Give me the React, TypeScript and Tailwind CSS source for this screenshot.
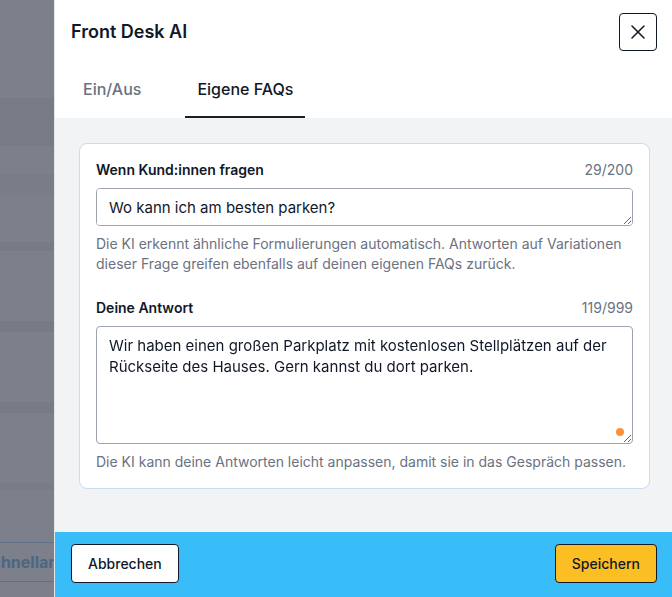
import { X } from "lucide-react";

function Backdrop() {
  return (
    <div className="w-[54px] shrink-0 bg-[#7b808b] flex flex-col overflow-hidden">
      <div className="h-[98px] shrink-0" />
      <div className="h-[48px] shrink-0 bg-[#767b86]" />
      <div className="h-[28px] shrink-0" />
      <div className="h-[21px] shrink-0 bg-[#787d88]" />
      <div className="h-[47px] shrink-0" />
      <div className="h-[9px] shrink-0 bg-[#767b86]" />
      <div className="h-[70px] shrink-0" />
      <div className="h-[11px] shrink-0 bg-[#767b86]" />
      <div className="h-[70px] shrink-0" />
      <div className="h-[11px] shrink-0 bg-[#767b86]" />
      <div className="h-[70px] shrink-0" />
      <div className="h-[7px] shrink-0 bg-[#777c87]" />
      <div className="h-[52px] shrink-0" />
      <div className="h-[40px] w-[54px] shrink-0 border-y border-[#5d7087] flex items-center overflow-hidden">
        <span className="-ml-[19px] whitespace-nowrap text-[16px] font-bold text-[#4d6682]">
          Schnellan
        </span>
      </div>
    </div>
  );
}

function Field({
  label,
  count,
  value,
  hint,
  heightClass,
  dot,
}: {
  label: string;
  count: string;
  value: string;
  hint: string;
  heightClass: string;
  dot?: boolean;
}) {
  return (
    <div className="flex flex-col">
      <div className="flex items-center justify-between">
        <span className="text-sm leading-5 font-semibold text-[#111827]">{label}</span>
        <span className="text-sm leading-5 text-[#6b7280]">{count}</span>
      </div>
      <div className="relative mt-2">
        <textarea
          readOnly
          value={value}
          className={`block w-full ${heightClass} rounded-[4px] border border-[#9ca3af] bg-white px-3 py-2 text-[15px] leading-[21px] text-[#111827] outline-none`}
        />
        {dot && (
          <span className="absolute right-[9px] bottom-[8px] h-2 w-2 rounded-full bg-[#fb923c]" />
        )}
      </div>
      <p className="mt-2 text-sm leading-5 text-[#6b7280]">{hint}</p>
    </div>
  );
}

export default function App() {
  return (
    <div
      className="flex h-[597px] w-[672px] overflow-hidden"
      style={{ fontFamily: "Inter, 'Noto Sans', sans-serif" }}
    >
      <Backdrop />
      <div className="flex min-w-0 flex-1 flex-col border-l border-[#e5e7eb] bg-white">
        {/* header */}
        <div className="pl-[16px] pr-[15px]">
          <div className="mt-[13px] flex h-[38px] items-center justify-between">
            <h2 className="text-lg font-semibold text-[#111827]">Front Desk AI</h2>
            <button className="flex h-[38px] w-[38px] shrink-0 items-center justify-center rounded-[4px] border border-[#111827] text-[#111827]">
              <X size={24} strokeWidth={1.5} />
            </button>
          </div>
          <div className="mt-[14px] flex gap-8">
            <button className="border-b-2 border-transparent px-3 pt-3 pb-[15px] text-base leading-6 font-medium text-[#6b7280]">
              Ein/Aus
            </button>
            <button className="border-b-2 border-[#1c1d2b] px-3 pt-3 pb-[15px] text-base leading-6 font-medium text-[#111827]">
              Eigene FAQs
            </button>
          </div>
        </div>

        {/* body */}
        <div className="flex-1 bg-[#f2f3f5] pt-[25px] pl-[24px] pr-[22px]">
          <div className="rounded-lg border border-[#c9dcf5] bg-white p-4">
            <Field
              label="Wenn Kund:innen fragen"
              count="29/200"
              value="Wo kann ich am besten parken?"
              hint="Die KI erkennt ähnliche Formulierungen automatisch. Antworten auf Variationen dieser Frage greifen ebenfalls auf deinen eigenen FAQs zurück."
              heightClass="h-[38px]"
            />
            <div className="mt-6">
              <Field
                label="Deine Antwort"
                count="119/999"
                value="Wir haben einen großen Parkplatz mit kostenlosen Stellplätzen auf der Rückseite des Hauses. Gern kannst du dort parken."
                hint="Die KI kann deine Antworten leicht anpassen, damit sie in das Gespräch passen."
                heightClass="h-[118px]"
                dot
              />
            </div>
          </div>
        </div>

        {/* footer */}
        <div className="flex h-[65px] shrink-0 items-start justify-between bg-[#38bdf8] pt-3 pl-[16px] pr-[15px]">
          <button className="h-[39px] rounded-[4px] border border-[#111827] bg-white px-4 text-sm font-medium text-[#111827]">
            Abbrechen
          </button>
          <button className="h-[39px] rounded-[4px] border border-[#111827] bg-[#fbbf24] px-4 text-sm font-medium text-[#111827]">
            Speichern
          </button>
        </div>
      </div>
    </div>
  );
}
